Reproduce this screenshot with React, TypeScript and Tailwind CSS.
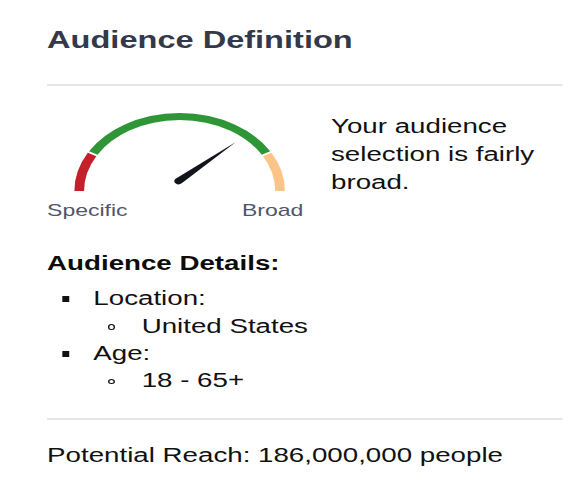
import React from "react";

const cx = 95.7;
const cy = 83;
const rx = 72.5;
const ry = 74.5;

function pt(deg: number): string {
  const r = (deg * Math.PI) / 180;
  return `${(cx + rx * Math.cos(r)).toFixed(2)} ${(cy - ry * Math.sin(r)).toFixed(2)}`;
}

function arc(a1: number, a2: number): string {
  return `M ${pt(a1)} A ${rx} ${ry} 0 0 1 ${pt(a2)}`;
}

function Gauge() {
  const bx = 95;
  const by = 73;
  const tx = 136.3;
  const ty = 34;
  const dx = tx - bx;
  const dy = ty - by;
  const len = Math.hypot(dx, dy);
  const w = 3.2;
  const px = (-dy / len) * w;
  const py = (dx / len) * w;
  const needle = `M ${bx + px} ${by + py} L ${tx} ${ty} L ${bx - px} ${by - py} A ${w} ${w} 0 0 0 ${bx + px} ${by + py} Z`;
  return (
    <svg width="185" height="93" viewBox="0 0 185 93" className="block">
      <path d={arc(180, 150.7)} fill="none" stroke="#c3202a" strokeWidth="7" />
      <path d={arc(149.3, 30.7)} fill="none" stroke="#2e9636" strokeWidth="7" />
      <path d={arc(29.3, 0)} fill="none" stroke="#fdc488" strokeWidth="7" />
      <path d={needle} fill="#12161c" />
    </svg>
  );
}

function Square() {
  return (
    <span className="flex w-[22.4px] shrink-0">
      <span className="mt-[11px] block h-[6px] w-[5.2px] bg-[#111]" />
    </span>
  );
}

function Circle() {
  return (
    <span className="flex w-[24px] shrink-0">
      <span className="mt-[11.5px] block h-[5.5px] w-[4.8px] rounded-full border-[1.3px] border-[#111]" />
    </span>
  );
}

export default function App() {
  return (
    <div className="h-[497px] w-[585px] overflow-hidden bg-white" style={{ fontFamily: '"Liberation Sans", Arial, sans-serif' }}>
      <div className="w-[423px] origin-top-left scale-x-[1.385] pl-[34px] pt-[26px]">
        <h1 className="text-[23.5px] font-bold leading-[28px] text-[#333949]">Audience Definition</h1>
        <div className="mt-[30px] h-[2px] w-[372px] bg-[#e6e6e6]" />

        <div className="mt-[22px] flex items-start">
          <div className="w-[185px] shrink-0">
            <Gauge />
            <div className="flex justify-between text-[16.6px] leading-[20px] text-[#50566a]">
              <span>Specific</span>
              <span>Broad</span>
            </div>
          </div>
          <p className="ml-[20px] mt-[4px] w-[180px] text-[20px] leading-[28px] text-[#111]">
            Your audience selection is fairly broad.
          </p>
        </div>

        <div className="mt-[28px] text-[20px] font-bold leading-[28px] text-[#0d0d0d]">Audience Details:</div>

        <ul className="mt-[8.4px] pl-[11px] text-[20px] leading-[27.3px] text-[#111]">
          <li>
            <div className="flex">
              <Square />
              <span>Location:</span>
            </div>
            <div className="flex pl-[22.4px]">
              <span className="w-[10.9px] shrink-0" />
              <Circle />
              <span>United States</span>
            </div>
          </li>
          <li>
            <div className="flex">
              <Square />
              <span>Age:</span>
            </div>
            <div className="flex pl-[22.4px]">
              <span className="w-[10.9px] shrink-0" />
              <Circle />
              <span>18 - 65+</span>
            </div>
          </li>
        </ul>

        <div className="mt-[23.4px] h-[2px] w-[372px] bg-[#e6e6e6]" />
        <div className="mt-[21px] text-[20px] leading-[28px] text-[#111]">Potential Reach: 186,000,000 people</div>
      </div>
    </div>
  );
}
